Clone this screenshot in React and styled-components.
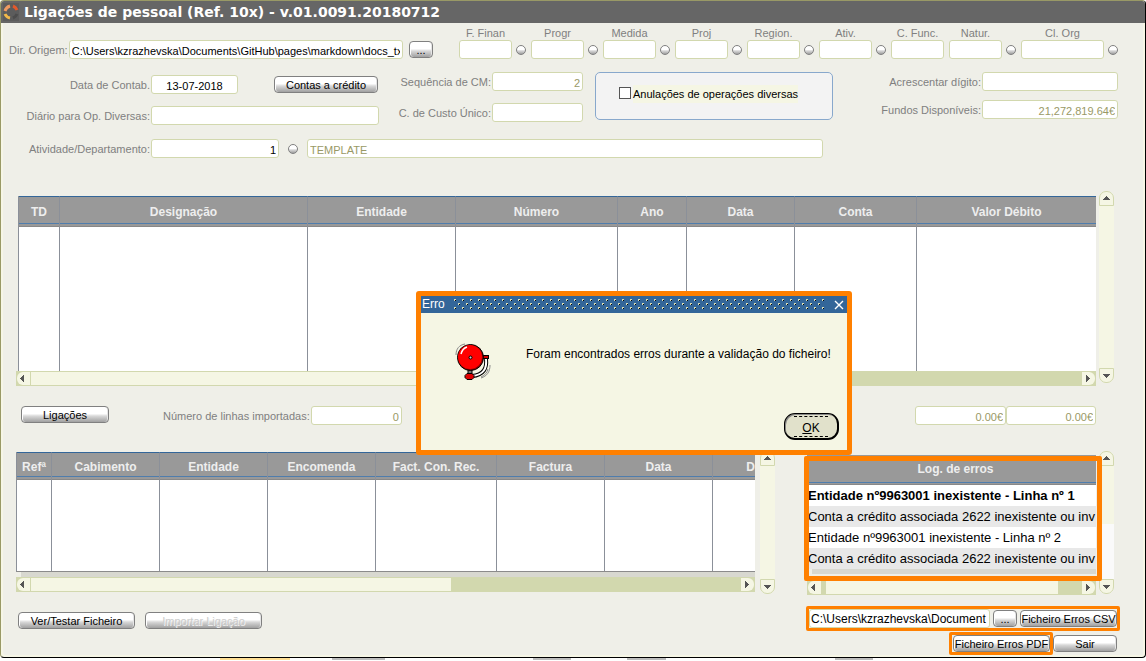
import React from "react";
import styled, { createGlobalStyle, css } from "styled-components";

const color = {
  ground: "#efefe8",
  cream: "#f5f6e4",
  line: "#d2d8ae",
  label: "#808080",
  value: "#999966",
  head: "#999999",
  grid: "#8b9099",
  blue: "#336699",
  mark: "#ff8000",
};

const GlobalStyle = createGlobalStyle`
  *, *::before, *::after { box-sizing: border-box; }
  body {
    margin: 0;
    background: #fff;
    color: #000;
    font: 11px/16px "Liberation Sans", Arial, sans-serif;
  }
  input, button { font: inherit; color: inherit; }
`;

/* ---------- window frame ---------- */

const Window = styled.main`
  position: relative;
  background: ${color.ground};
  border: 1px solid #999966;
  border-right-color: #000;
  border-bottom-color: #000;
  border-radius: 4px;
  box-shadow: inset 2px -2px 0 #f6f6e6, inset -2px 0 0 #f6f6e6;
  overflow: hidden;
  padding-bottom: 2px;
`;

const TitleBar = styled.header`
  display: flex;
  align-items: center;
  gap: 5px;
  height: 22px;
  padding-left: 2px;
  background: #666;
  color: #fff;
`;

const Title = styled.h1`
  margin: 0;
  font: bold 14px/22px Verdana, "DejaVu Sans", sans-serif;
  white-space: nowrap;
`;

/* ---------- form parts ---------- */

const Row = styled.div`
  display: flex;
  flex: ${(p) => (p.$grow ? "1 1 0" : "none")};
  align-items: ${(p) => p.$align || "center"};
  gap: ${(p) => p.$gap || 0}px;
  padding-right: ${(p) => p.$right || 0}px;
`;

const Column = styled.div`
  display: flex;
  flex-direction: column;
  gap: ${(p) => p.$gap || 0}px;
`;

const Form = styled.form`
  display: flex;
  flex-direction: column;
  padding: 4px 27px 0 8px;
`;

const Label = styled.label`
  flex: none;
  width: ${(p) => (p.$width ? p.$width + "px" : "auto")};
  padding-right: 1px;
  color: ${color.label};
  text-align: right;
  white-space: nowrap;
`;

const TextBox = styled.input`
  flex: ${(p) => (p.$grow ? "1 1 0" : "none")};
  width: ${(p) => (p.$width ? p.$width + "px" : "auto")};
  min-width: 0;
  height: 19px;
  padding: ${(p) => p.$pad || "2px 2px 0"};
  border: 1px solid ${color.line};
  border-radius: 3px;
  background: #fff;
  color: ${(p) => (p.$muted ? color.value : "#000")};
  font-size: ${(p) => (p.$large ? 12 : 11)}px;
  text-align: ${(p) => p.$align || "left"};
  outline: none;
`;

const silver = css`
  border: 1px solid #808080;
  background: linear-gradient(#fff 0%, #fff 45%, #d8d8d8 60%, #a0a0a0 100%);
`;

const Button = styled.button`
  ${silver}
  flex: none;
  width: ${(p) => p.$width}px;
  height: 17px;
  padding: 0;
  border-radius: 4px;
  box-shadow: inset 1px 0 0 #fff, inset -1px 0 0 #e6e6e6;
  line-height: 17px;
  white-space: nowrap;
  &:disabled { color: #ccc; text-shadow: 1px 1px 0 #f4f4f4; }
`;

const Lookup = styled.button`
  ${silver}
  flex: none;
  width: 10px;
  height: 10px;
  padding: 0;
  border-radius: 5px;
`;

const CodeGroup = styled.div`
  display: grid;
  grid-template-columns: ${(p) => p.$width}px ${(p) => (p.$lookup ? "10px" : "")};
  column-gap: 4px;
  align-items: center;
  ${Label} { grid-column: 1; padding: 0; line-height: 13px; text-align: center; }
  ${TextBox} { grid-row: 2; }
  ${Lookup} { grid-row: 2; }
`;

const OptionBox = styled.div`
  flex: none;
  width: 238px;
  height: 48px;
  padding: 12px 0 0 23px;
  border: 1px solid #88a8cc;
  border-radius: 5px;
  background: #f3f3f3;
`;

const CheckLabel = styled.label`
  display: inline-flex;
  align-items: center;
  gap: 2px;
  span { height: 18px; line-height: 18px; background: ${color.cream}; }
`;

const CheckBox = styled.input`
  appearance: none;
  width: 12px;
  height: 12px;
  margin: 0 0 2px;
  border: 1px solid #555;
  background: #fff;
`;

/* ---------- tables and scroll bars ---------- */

const Area = styled.section`
  display: flex;
  align-items: flex-start;
  gap: ${(p) => p.$gap}px;
  padding: 0 ${(p) => p.$right || 0}px 0 ${(p) => p.$left || 0}px;
`;

const Pane = styled.div`
  position: relative;
  flex: ${(p) => (p.$width ? "none" : "1 1 0")};
  width: ${(p) => (p.$width ? p.$width + "px" : "auto")};
  min-width: 0;
  padding-top: ${(p) => p.$top}px;
`;

const Grid = styled.table`
  width: ${(p) => (p.$inset ? "calc(100% - 2px)" : "100%")};
  margin-left: ${(p) => (p.$inset ? 2 : 0)}px;
  table-layout: fixed;
  border-collapse: separate;
  border-spacing: 0;
  background: #fff;
  border-left: 1px solid ${color.grid};
  border-bottom: ${(p) => (p.$closed ? "1px solid #8b8b8b" : "none")};

  th {
    height: ${(p) => p.$headHeight}px;
    padding: 0;
    border-top: 1px solid ${color.blue};
    border-left: 1px solid ${color.grid};
    background: linear-gradient(to top, #888 0 1px, ${color.head} 1px 3px, #4f7dad 3px 4px, ${color.head} 4px);
    color: #eee;
    font-size: 12px;
    line-height: 16px;
    overflow: hidden;
    white-space: nowrap;
  }
  td {
    height: ${(p) => p.$bodyHeight}px;
    padding: 0;
    border-left: 1px solid ${color.grid};
  }
  th:first-child, td:first-child { border-left: 0; }
  th:last-child { text-align: ${(p) => (p.$cut ? "right" : "center")}; }
`;

const LogTable = styled.table`
  width: 100%;
  table-layout: fixed;
  border-spacing: 0;
  background: #fff;
  font-size: 13px;

  th {
    height: 30px;
    padding: 0 0 2px 8px;
    background: linear-gradient(to top, #888 0 1px, ${color.head} 1px 2px, #4f7dad 2px 3px, ${color.head} 3px);
    color: #eee;
    font-size: 12px;
  }
  td {
    height: 21px;
    padding: 0 0 0 1px;
    line-height: 21px;
    overflow: hidden;
    white-space: nowrap;
  }
  tbody tr:nth-child(even) { background: #e8e8e8; }
  tbody tr:first-child { font-weight: bold; }
`;

const Shade = styled.div`
  height: 5px;
  margin-left: 5px;
  margin-bottom: ${(p) => p.$space || 0}px;
  background: #d8d8d0;
`;

const HBar = styled.div`
  display: flex;
  height: 15px;
  padding: 1px;
  background: ${color.line};
`;

const HThumb = styled.div`
  flex: 0 0 ${(p) => p.$size}%;
  margin-left: ${(p) => p.$gap || 1}px;
  background: ${color.cream};
`;

const VBar = styled.div`
  display: flex;
  flex-direction: column;
  flex: none;
  width: 15px;
  height: ${(p) => p.$height}px;
  border-radius: 7px;
  background: linear-gradient(${color.cream} ${(p) => p.$fill || 100}%, #fafafa 0);
`;

const arrows = {
  left: { r: "6px 0 0 6px", d: "M7 3v7L3 6.5z" },
  right: { r: "0 6px 6px 0", d: "M4 3v7l4-3.5z" },
  up: { r: "7px 7px 0 0", d: "M3 8h7L6.5 4z" },
  down: { r: "0 0 7px 7px", d: "M3 5h7L6.5 9z" },
};

const Arrow = styled.button`
  flex: none;
  width: ${(p) => (p.$vertical ? 15 : 13)}px;
  height: ${(p) => (p.$vertical ? 15 : 13)}px;
  margin: ${(p) => (p.$push ? (p.$vertical ? "auto 0 0" : "0 0 0 auto") : 0)};
  padding: 0;
  border: ${(p) => (p.$vertical ? "1px solid " + color.line : "0")};
  border-radius: ${(p) => p.$radius};
  background: ${color.cream};
  svg { display: block; }
`;

function ScrollArrow({ dir }) {
  const vertical = dir === "up" || dir === "down";
  return (
    <Arrow
      type="button"
      aria-label={dir}
      $vertical={vertical}
      $push={dir === "right" || dir === "down"}
      $radius={arrows[dir].r}
    >
      <svg width="13" height="13" viewBox="0 0 13 13" shapeRendering="crispEdges">
        <path d={arrows[dir].d} fill="#555" />
      </svg>
    </Arrow>
  );
}

function HScroll({ size, gap }) {
  return (
    <HBar>
      <ScrollArrow dir="left" />
      <HThumb $size={size} $gap={gap} />
      <ScrollArrow dir="right" />
    </HBar>
  );
}

function VScroll({ height, fill }) {
  return (
    <VBar $height={height} $fill={fill}>
      <ScrollArrow dir="up" />
      <ScrollArrow dir="down" />
    </VBar>
  );
}

/* ---------- highlight frames ---------- */

const LogMark = styled.div`
  position: absolute;
  z-index: 1;
  inset: 5px -6px 14px -3px;
  border: 5px solid ${color.mark};
  border-radius: 2px;
  pointer-events: none;
`;

const Marked = styled.div`
  display: flex;
  align-items: center;
  gap: 3px;
  padding: ${(p) => p.$pad};
  border: 3px solid ${color.mark};
  border-radius: 2px;
`;

const Actions = styled.footer`
  display: flex;
  justify-content: space-between;
  align-items: flex-start;
  padding: 11px 25px 0 17px;
`;

/* ---------- error dialog ---------- */

const Dialog = styled.div`
  position: absolute;
  z-index: 2;
  left: 415px;
  top: 290px;
  width: 436px;
  border: 5px solid ${color.mark};
  border-radius: 3px;
  background: ${color.cream};
  font-size: 12px;
`;

const DialogBar = styled.div`
  display: flex;
  align-items: center;
  height: 17px;
  padding: 0 1px;
  background: ${color.blue};
  color: #fff;
  h2 { margin: 0; width: 32px; font: 12px/14px "Liberation Sans", Arial, sans-serif; height: 16px; }
  > svg { flex: 1 1 0; min-width: 0; height: 11px; }
`;

const Close = styled.button`
  width: 20px;
  height: 16px;
  padding: 0 0 0 8px;
  border: 0;
  background: none;
  svg { display: block; }
`;

const DialogBody = styled.div`
  display: flex;
  gap: 34px;
  padding: 30px 6px 0 34px;
  p { margin: 3px 0 0; white-space: nowrap; }
`;

const DialogFoot = styled.div`
  display: flex;
  justify-content: flex-end;
  padding: 32px 8px 10px;
`;

const OkButton = styled.button`
  width: 55px;
  height: 27px;
  padding: 0;
  border: 1px solid #000;
  border-right-width: 2px;
  border-bottom-width: 2px;
  border-radius: 11px;
  background: #e1e1cb;
  box-shadow: inset 1px 1px 0 #888;
  span {
    display: block;
    margin: 0 9px;
    height: 21px;
    border-top: 1px dashed #000;
    border-bottom: 1px dashed #000;
    line-height: 22px;
  }
`;

function Logo() {
  return (
    <svg width="16" height="18" viewBox="0 0 16 18" fill="none" strokeWidth="3">
      <rect width="16" height="18" fill="#5c5c5c" />
      <path d="M10 3A7 7 0 0 1 14 7" stroke="#e2592c" />
      <path d="M14 11A7 7 0 0 1 10 15" stroke="#4c4c4c" />
      <path d="M7 15A7 7 0 0 1 2 11" stroke="#f2b94a" />
      <path d="M2 8A7 7 0 0 1 7 3" stroke="#ee9a62" />
    </svg>
  );
}

function Bell() {
  return (
    <svg width="37" height="38" viewBox="0 0 37 38" fill="none">
      <path d="M1 12C1 6 4 2 10 1M3 12C4 7 6 4 10 3" stroke="#888" />
      <path d="M35 22c0 7-3 11-9 13M33 26c-1 4-3 6-7 8" stroke="#888" />
      <path d="M31 16c1 9-2 16-14 17" stroke="#000" strokeWidth="4" />
      <path d="M31 16c1 9-2 16-14 17" stroke="#fff" strokeWidth="2" />
      <rect x="26.5" y="12.500" width="7" height="3" fill="#c00" stroke="#000" />
      <path d="M13 26h4v5h-4z" fill="#777" stroke="#000" />
      <circle cx="15.500" cy="14.500" r="13" fill="#8c0000" stroke="#000" />
      <circle cx="15" cy="14" r="12" fill="#f00" />
      <path d="M6 11c1-4 3-6 6-7" stroke="#fff" strokeWidth="1.5" />
      <circle cx="15.500" cy="14.500" r="1.500" fill="#ccc" stroke="#000" />
      <path d="M12 30.500h5l2 2v2l-2 2h-5l-2-2v-2z" fill="#e00000" stroke="#000" />
    </svg>
  );
}

function Dots() {
  return (
    <svg shapeRendering="crispEdges" aria-hidden="true">
      <defs>
        <pattern id="dots" width="8" height="8" patternUnits="userSpaceOnUse">
          <path d="M1 1h1v1h-1z M5 5h1v1h-1z" fill="#000" />
          <path d="M2 1h-1v1h1v0zM1 2h1v-1h0zM5 6h1v-1h0z" fill="#000" />
          <path d="M0 0h2v1h-1v1h-1z M4 4h2v1h-1v1h-1z" fill="#d6dcb8" />
        </pattern>
      </defs>
      <rect width="100%" height="10" fill="url(#dots)" />
    </svg>
  );
}

/* ---------- strip below the window ---------- */

const Strip = styled.div`
  display: flex;
  height: 2px;
  padding-left: 220px;
  overflow: hidden;
`;

const Tab = styled.div`
  flex: none;
  width: ${(p) => p.$width}px;
  margin-right: ${(p) => p.$after}px;
  background: ${(p) => p.$fill || "#bdbdbd"};
`;

/* ---------- content ---------- */

const codes = [
  { id: "finan", text: "F. Finan", lookup: true },
  { id: "progr", text: "Progr", lookup: true },
  { id: "medida", text: "Medida", lookup: true },
  { id: "proj", text: "Proj", lookup: true },
  { id: "region", text: "Region.", lookup: true },
  { id: "ativ", text: "Ativ.", lookup: true },
  { id: "func", text: "C. Func.", lookup: false },
  { id: "natur", text: "Natur.", lookup: true },
  { id: "org", text: "Cl. Org", lookup: true, width: 83 },
];

const mainColumns = [
  ["TD", 40],
  ["Designação", 248],
  ["Entidade", 148],
  ["Número", 162],
  ["Ano", 69],
  ["Data", 108],
  ["Conta", 122],
  ["Valor Débito"],
];

const detailColumns = [
  ["Refª", 34],
  ["Cabimento", 108],
  ["Entidade", 108],
  ["Encomenda", 108],
  ["Fact. Con. Rec.", 121],
  ["Factura", 108],
  ["Data", 108],
  ["D"],
];

const errors = [
  "Entidade nº9963001 inexistente - Linha nº 1",
  "Conta a crédito associada 2622 inexistente ou inv",
  "Entidade nº9963001 inexistente - Linha nº 2",
  "Conta a crédito associada 2622 inexistente ou inv",
];

function DataGrid({ columns, ...rest }) {
  return (
    <Grid {...rest}>
      <colgroup>
        {columns.map(([name, width], i) => (
          <col key={i} width={width} />
        ))}
      </colgroup>
      <thead>
        <tr>{columns.map(([name], i) => <th key={i} scope="col">{name}</th>)}</tr>
      </thead>
      <tbody>
        <tr>{columns.map((c, i) => <td key={i} />)}</tr>
      </tbody>
    </Grid>
  );
}

function Field({ id, label, labelWidth, width, ...rest }) {
  return (
    <Row>
      <Label htmlFor={id} $width={labelWidth}>{label}</Label>
      <TextBox id={id} $width={width} {...rest} />
    </Row>
  );
}

const Push = styled.div`
  margin-left: ${(p) => (p.$by ? p.$by + "px" : "auto")};
  margin-top: ${(p) => p.$top || 0}px;
`;

const Section = styled.div`
  margin-top: ${(p) => p.$top}px;
`;

export default function App() {
  return (
    <>
      <GlobalStyle />
      <Window>
        <TitleBar>
          <Logo />
          <Title>Ligações de pessoal (Ref. 10x) - v.01.0091.20180712</Title>
        </TitleBar>

        <Form onSubmit={(e) => e.preventDefault()}>
          <Row $align="flex-end" $gap={5}>
            <Row $grow>
              <Label htmlFor="dir">Dir. Origem:</Label>
              <TextBox id="dir" $grow defaultValue="C:\Users\kzrazhevska\Documents\GitHub\pages\markdown\docs_txt" />
              <Push $by={6} />
              <Button type="button" $width={24}>...</Button>
            </Row>
            <Push $by={16} />
            {codes.map((c) => (
              <CodeGroup key={c.id} $width={c.width || 53} $lookup={c.lookup}>
                <Label htmlFor={c.id}>{c.text}</Label>
                <TextBox id={c.id} />
                {c.lookup && <Lookup type="button" aria-label={c.text} />}
              </CodeGroup>
            ))}
          </Row>

          <Section $top={13}>
            <Row $align="flex-start">
              <Push $by={4} $top={3}>
                <Column $gap={12}>
                  <Row $gap={36}>
                    <Field id="data" label="Data de Contab." labelWidth={138} width={87} $align="center" defaultValue="13-07-2018" />
                    <Button type="button" $width={104}>Contas a crédito</Button>
                  </Row>
                  <Field id="diario" label="Diário para Op. Diversas:" labelWidth={138} width={228} />
                </Column>
              </Push>
              <Push $by={13}>
                <Column $gap={12}>
                  <Field id="seq" label="Sequência de CM:" labelWidth={100} width={91} $muted $align="right" defaultValue="2" />
                  <Field id="custo" label="C. de Custo Único:" labelWidth={100} width={91} />
                </Column>
              </Push>
              <Push $by={12} />
              <OptionBox>
                <CheckLabel>
                  <CheckBox type="checkbox" />
                  <span>Anulações de operações diversas</span>
                </CheckLabel>
              </OptionBox>
              <Push>
                <Column $gap={9}>
                  <Field id="digito" label="Acrescentar dígito:" labelWidth={110} width={136} />
                  <Field id="fundos" label="Fundos Disponíveis:" labelWidth={110} width={136} $muted $align="right" defaultValue="21,272,819.64€" />
                </Column>
              </Push>
            </Row>
          </Section>

          <Section $top={14}>
            <Row $gap={9}>
              <Push $by={4}>
                <Field id="depto" label="Atividade/Departamento:" labelWidth={138} width={128} $align="right" defaultValue="1" />
              </Push>
              <Lookup type="button" aria-label="Atividade" />
              <TextBox $width={516} $muted aria-label="Nome" defaultValue="TEMPLATE" />
            </Row>
          </Section>
        </Form>

        <Section $top={33}>
          <Area $gap={3} $left={15} $right={31}>
            <Pane $top={5}>
              <DataGrid columns={mainColumns} $inset $headHeight={31} $bodyHeight={144} />
              <HScroll size={65} />
            </Pane>
            <VScroll height={192} />
          </Area>
        </Section>

        <Section $top={20}>
          <Area $left={20} $right={49}>
            <Button type="button" $width={88}>Ligações</Button>
            <Push $by={54}>
              <Field id="linhas" label="Número de linhas importadas:" width={91} $muted $align="right" defaultValue="0" />
            </Push>
            <Push>
              <Row>
                <TextBox $width={91} $muted $align="right" aria-label="Débito" defaultValue="0.00€" />
                <TextBox $width={90} $muted $align="right" aria-label="Crédito" defaultValue="0.00€" />
              </Row>
            </Push>
          </Area>
        </Section>

        <Section $top={26}>
          <Area $gap={3} $left={15} $right={31}>
            <Pane $top={1}>
              <DataGrid columns={detailColumns} $closed $cut $headHeight={28} $bodyHeight={91} />
              <Shade />
              <HScroll size={57} />
            </Pane>
            <Push $by={2}>
              <VScroll height={143} />
            </Push>
            <Push $by={26} />
            <Pane $width={289} $top={4}>
              <LogTable>
                <thead>
                  <tr><th scope="col">Log. de erros</th></tr>
                </thead>
                <tbody>
                  {errors.map((e, i) => <tr key={i}><td>{e}</td></tr>)}
                </tbody>
              </LogTable>
              <Shade $space={6} />
              <HScroll size={81} gap={5} />
              <LogMark />
            </Pane>
            <VScroll height={143} fill={51} />
          </Area>
        </Section>

        <Actions>
          <Section $top={6}>
            <Row $gap={10}>
              <Button type="button" $width={117}>Ver/Testar Ficheiro</Button>
              <Button type="button" $width={117} disabled>Importar Ligação</Button>
            </Row>
          </Section>
          <Column $gap={1}>
            <Marked $pad="0">
              <TextBox $width={181} $large $pad="0 1px" aria-label="Ficheiro" defaultValue="C:\Users\kzrazhevska\Document" />
              <Button type="button" $width={24}>...</Button>
              <Button type="button" $width={97}>Ficheiro Erros CSV</Button>
            </Marked>
            <Row $right={3}>
              <Push>
                <Marked $pad="0 0 0 1px">
                  <Button type="button" $width={97}>Ficheiro Erros PDF</Button>
                </Marked>
              </Push>
              <Button type="button" $width={64}>Sair</Button>
            </Row>
          </Column>
        </Actions>

        <Dialog role="dialog" aria-labelledby="erro">
          <DialogBar>
            <h2 id="erro">Erro</h2>
            <Dots />
            <Close type="button" aria-label="Fechar">
              <svg width="11" height="10" viewBox="0 0 11 10" stroke="#fff" strokeWidth="1.4">
                <path d="M1 1l8 8M9 1l-8 8" />
              </svg>
            </Close>
          </DialogBar>
          <DialogBody>
            <Bell />
            <p>Foram encontrados erros durante a validação do ficheiro!</p>
          </DialogBody>
          <DialogFoot>
            <OkButton type="button"><span><u>O</u>K</span></OkButton>
          </DialogFoot>
        </Dialog>
      </Window>
      <Strip>
        <Tab $width={70} $after={42} $fill="#ffdf94" />
        <Tab $width={53} $after={148} />
        <Tab $width={38} $after={56} />
        <Tab $width={39} $after={169} />
        <Tab $width={38} $after={0} />
      </Strip>
    </>
  );
}
